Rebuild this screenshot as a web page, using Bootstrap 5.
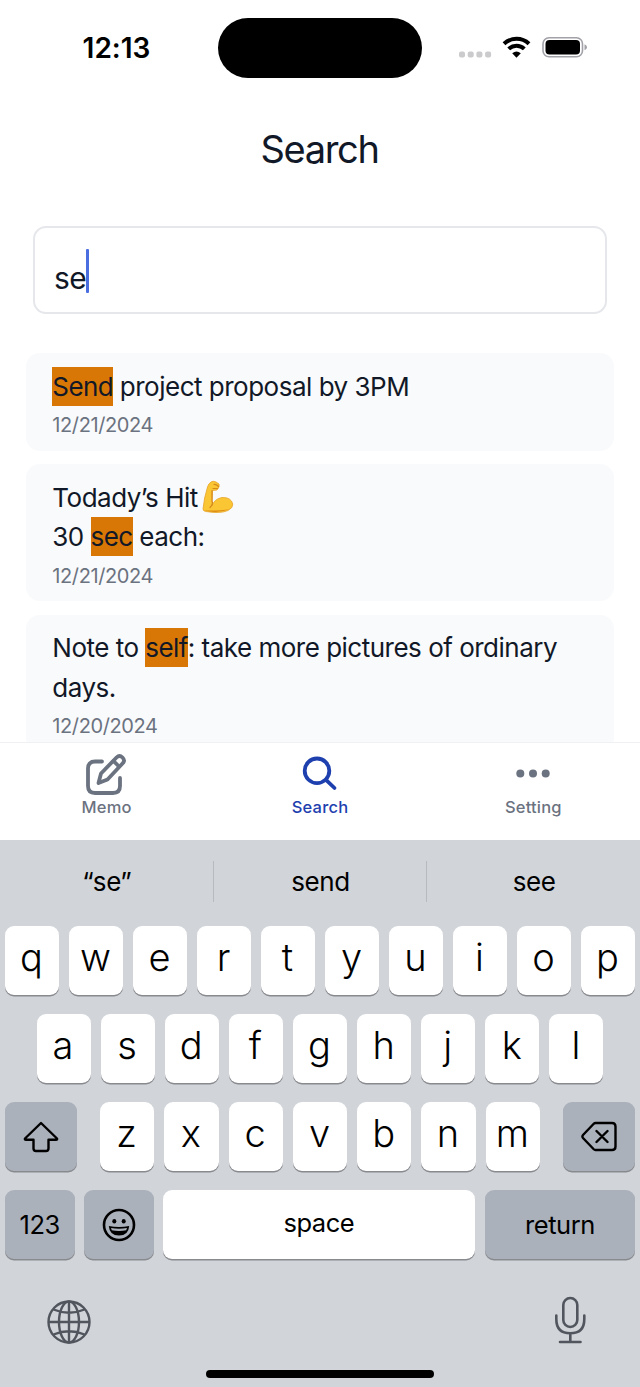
<!DOCTYPE html>
<html lang="en">
<head>
<meta charset="utf-8">
<meta name="viewport" content="width=device-width, initial-scale=1">
<title>Search</title>
<link rel="stylesheet" href="https://cdn.jsdelivr.net/npm/bootstrap@5.3.0/dist/css/bootstrap.min.css">
<style>
  body { font-family: Inter, "Liberation Sans", sans-serif; color: #111827; font-size: 26px; line-height: 39px; font-feature-settings: "calt" 0; }
  svg { display: block; flex: none; }
  .screen { width: 640px; height: 1387px; }
  .statusbar { height: 96px; padding-top: 18px; }
  .clock { width: 218px; padding-left: 15px; height: 60px; font-size: 28px; font-weight: 600; letter-spacing: 0; color: #000; }
  .island { width: 204px; height: 60px; border-radius: 30px; background: #000; }
  .indicators { width: 218px; height: 60px; padding-left: 37px; }
  .app-title { height: 130px; padding-top: 25px; font-size: 38px; line-height: 56px; letter-spacing: -1.35px; font-weight: 400; margin: 0; padding-right: 1px; }
  .search-field { height: 88px; margin: 0 33px; border: 2px solid #e5e7eb; border-radius: 13px; padding: 21px 0 0 19px; font-size: 30px; letter-spacing: -.5px; }
  .search-field .typed { line-height: 58px; }
  .caret { width: 3px; height: 44px; border-radius: 1px; background: #4a6ee0; margin-left: -.5px; }
  .results { height: 428px; padding: 39px 26px 0; gap: 13.5px; }
  .memo { flex: none; background: #f9fafb; border-radius: 14px; padding: 13.7px 27px 6.5px 26.3px; }
  .memo p { margin: 0; letter-spacing: -.5px; line-height: 39.4px; }
  .memo time { display: block; font-size: 20px; line-height: 38px; letter-spacing: -.4px; color: #6b7280; }
  .hit { display: inline-block; height: 39px; background: #d97706; letter-spacing: -.6px; }
  .arm { display: inline-block; vertical-align: -7px; margin-left: 4px; }
  .tabs { height: 98px; border-top: 1px solid #f0f1f4; }
  .tab { color: #6b7280; font-size: 16.5px; font-weight: 500; line-height: 20px; letter-spacing: .2px; padding-top: 10px; }
  .tab svg { height: 44px; }
  .tab.on { color: #1e40af; }
  .keyboard { height: 547px; background: #d1d4d9; color: #000; }
  .suggestions { height: 86px; letter-spacing: -.4px; }
  .suggestions > div { flex: 1 1 0; line-height: 42px; margin-top: 21px; height: 41px; padding-left: 1px; }
  .suggestions > div:not(:last-child) { border-right: 1px solid #b7bac0; }
  .keys { height: 88px; padding: 0 5px; gap: 10px; }
  .keys.home { padding: 0 36.5px; }
  .keys.bottom { gap: 9.66px; }
  .key { flex: 1 1 0; height: 69px; border-radius: 9px; background: #fff; box-shadow: 0 1.5px 0 #888a8e; font-size: 38px; font-weight: 300; padding-bottom: 7px; padding-right: 1px; }
  .key.fn { background: #abb1bb; font-size: 25.5px; font-weight: 400; padding-bottom: 0; padding-right: 0; letter-spacing: -.4px; }
  .key.space { flex: 0 0 312px; font-size: 25.5px; font-weight: 400; padding-bottom: 5px; letter-spacing: -.5px; }
  .key.w72 { flex: 0 0 72px; } .key.w70 { flex: 0 0 69.5px; } .key.w150 { flex: 0 0 150px; }
  .letters { gap: 10px; margin: 0 13px; }
  .dock { padding: 14px 51px 0 47px; color: #51555d; }
  .home-bar { width: 228px; height: 8px; border-radius: 4px; background: #000; margin: 26px auto 0; }
</style>
</head>
<body>
<main class="screen overflow-hidden bg-white">
  <header class="statusbar d-flex">
    <div class="clock d-flex align-items-center justify-content-center">12:13</div>
    <div class="island"></div>
    <div class="indicators d-flex align-items-center">
      <svg width="132" height="30" viewBox="0 0 132 30">
        <g fill="#cbcbce"><rect y="18.500" width="6" height="6" rx="2"/><rect x="8.700" y="18.500" width="6" height="6" rx="2"/><rect x="17.400" y="18.500" width="6" height="6" rx="2"/><rect x="26.100" y="18.500" width="6" height="6" rx="2"/></g>
        <g fill="none" stroke="#000" stroke-width="4"><path d="M45 10.800A18.200 18.200 0 0 1 70 10.800"/><path d="M49.700 15.900A11.200 11.200 0 0 1 65.300 15.900"/></g>
        <path d="M53.200 20.200Q57.500 16.600 61.800 20.200L57.500 24.700Z"/>
        <rect x="84" y="4.700" width="39.500" height="19" rx="6" fill="none" stroke="#a1a2a8" stroke-width="1.600"/>
        <rect x="86.500" y="7" width="34.500" height="14.500" rx="4"/>
        <path d="M125.500 11.200Q128 12 128 14.200T125.500 17.200Z" fill="#a1a2a8"/>
      </svg>
    </div>
  </header>

  <h1 class="app-title text-center">Search</h1>

  <div class="search-field d-flex"><span class="typed">se</span><span class="caret"></span></div>

  <section class="results d-flex flex-column overflow-hidden">
    <article class="memo"><p><span class="hit">Send</span> project proposal by 3PM</p><time>12/21/2024</time></article>
    <article class="memo"><p>Todady’s Hit<svg class="arm" width="32" height="34" viewBox="0 0 32 34" role="img" aria-label="flexed biceps">
      <path d="M9 2Q11 .6 14 2L17 4Q18 7 15 10L10.500 10.500L10 21Q11 24 10 26Q12 19 20 17.500Q29 17 30.800 24Q31 28 26 30.500Q18 34 4 31.500Q1 31 1 29Q2 18 5.500 7Q6.500 3.500 9 2Z" fill="#fbc634" stroke="#e6a32a" stroke-width=".8"/>
      <path d="M2 30.500Q16 34 28 29Q18 31 2 30.500Z" fill="#dc8b16"/><path d="M10 10.500V21Q11.500 24 8 27.500M11 8.500L15.500 8.500M12 4.500Q14 4 16.500 6.500" fill="none" stroke="#d4891c" stroke-width="1.200" stroke-linecap="round"/></svg><br>30 <span class="hit">sec</span> each:</p><time>12/21/2024</time></article>
    <article class="memo"><p>Note to <span class="hit">self</span>: take more pictures of ordinary<br>days.</p><time>12/20/2024</time></article>
  </section>

  <nav class="tabs row g-0 text-center">
    <div class="tab col d-flex flex-column align-items-center">
      <svg width="44" height="44" viewBox="0 0 44 44" fill="none" stroke="currentColor" stroke-width="3.800" stroke-linecap="round" stroke-linejoin="round"><path d="M17 8.500H10Q3 8.500 3 15.500V33Q3 40 10 40H28Q35 40 35 33V25"/><path d="M13.500 30L16 20.500L31.500 4.500Q34.500 1.500 37.500 4.500Q40.500 7.500 37.500 10.500L22.500 26.500Z"/><path d="M28.500 8L34 13.500"/></svg>
      <span>Memo</span>
    </div>
    <div class="tab on col d-flex flex-column align-items-center">
      <svg width="44" height="44" viewBox="0 0 44 44" fill="none" stroke="currentColor" stroke-width="3.800" stroke-linecap="round"><circle cx="19" cy="17.800" r="12.300"/><path d="M28 26.800L36.500 35"/></svg>
      <span>Search</span>
    </div>
    <div class="tab col d-flex flex-column align-items-center">
      <svg width="44" height="44" viewBox="0 0 44 44" fill="currentColor"><circle cx="9.300" cy="20.500" r="4"/><circle cx="22" cy="20.500" r="4"/><circle cx="34.700" cy="20.500" r="4"/></svg>
      <span>Setting</span>
    </div>
  </nav>

  <section class="keyboard">
    <div class="suggestions d-flex text-center"><div>“se”</div><div>send</div><div>see</div></div>
    <div class="keys d-flex">
      <div class="key d-flex align-items-center justify-content-center">q</div><div class="key d-flex align-items-center justify-content-center">w</div><div class="key d-flex align-items-center justify-content-center">e</div><div class="key d-flex align-items-center justify-content-center">r</div><div class="key d-flex align-items-center justify-content-center">t</div><div class="key d-flex align-items-center justify-content-center">y</div><div class="key d-flex align-items-center justify-content-center">u</div><div class="key d-flex align-items-center justify-content-center">i</div><div class="key d-flex align-items-center justify-content-center">o</div><div class="key d-flex align-items-center justify-content-center">p</div>
    </div>
    <div class="keys home d-flex">
      <div class="key d-flex align-items-center justify-content-center">a</div><div class="key d-flex align-items-center justify-content-center">s</div><div class="key d-flex align-items-center justify-content-center">d</div><div class="key d-flex align-items-center justify-content-center">f</div><div class="key d-flex align-items-center justify-content-center">g</div><div class="key d-flex align-items-center justify-content-center">h</div><div class="key d-flex align-items-center justify-content-center">j</div><div class="key d-flex align-items-center justify-content-center">k</div><div class="key d-flex align-items-center justify-content-center">l</div>
    </div>
    <div class="keys d-flex">
      <div class="key fn w72 d-flex align-items-center justify-content-center">
        <svg width="36" height="32" viewBox="0 0 36 32" fill="none" stroke="#000" stroke-width="2.400" stroke-linejoin="round"><path d="M18 2L34 17.500Q34.500 18.800 33 18.800H25.500V27.500Q25.500 30 23 30H13Q10.500 30 10.500 27.500V18.800H3Q1.500 18.800 2 17.500Z"/></svg>
      </div>
      <div class="letters d-flex flex-fill">
        <div class="key d-flex align-items-center justify-content-center">z</div><div class="key d-flex align-items-center justify-content-center">x</div><div class="key d-flex align-items-center justify-content-center">c</div><div class="key d-flex align-items-center justify-content-center">v</div><div class="key d-flex align-items-center justify-content-center">b</div><div class="key d-flex align-items-center justify-content-center">n</div><div class="key d-flex align-items-center justify-content-center">m</div>
      </div>
      <div class="key fn w72 d-flex align-items-center justify-content-center">
        <svg width="36" height="32" viewBox="0 0 36 32" fill="none" stroke="#000" stroke-width="2.400" stroke-linejoin="round" stroke-linecap="round"><path d="M14.500 2H31Q34.500 2 34.500 5.500V25.500Q34.500 29 31 29H14.500Q13.500 29 12.500 28L2 17Q.8 15.500 2 14L12.500 3Q13.500 2 14.500 2ZM15.500 10L26.500 21M26.500 10L15.500 21"/></svg>
      </div>
    </div>
    <div class="keys bottom d-flex">
      <div class="key fn w70 d-flex align-items-center justify-content-center">123</div>
      <div class="key fn w70 d-flex align-items-center justify-content-center">
        <svg width="34" height="34" viewBox="0 0 34 34"><circle cx="17" cy="17" r="15" fill="none" stroke="#000" stroke-width="2.600"/><ellipse cx="12.300" cy="13.300" rx="2" ry="2.300"/><ellipse cx="21.700" cy="13.300" rx="2" ry="2.300"/><path d="M6.800 18Q17 20 27.200 18Q26.500 27.500 17 27.500T6.800 18Z"/><path d="M9 20Q17 21.500 25 20L24.200 22.200Q17 23.800 9.800 22.200Z" fill="#abb1bb"/></svg>
      </div>
      <div class="key space d-flex align-items-center justify-content-center">space</div>
      <div class="key fn w150 d-flex align-items-center justify-content-center">return</div>
    </div>
    <div class="dock d-flex justify-content-between">
      <svg width="44" height="52" viewBox="0 0 44 52" fill="none" stroke="currentColor" stroke-width="2.400"><circle cx="22" cy="30" r="20.500"/><path d="M22 9.500V50.500M1.500 30H42.500M6.500 17.500Q22 24 37.500 17.500M6.500 42.500Q22 36 37.500 42.500"/><ellipse cx="22" cy="30" rx="10" ry="20.500"/></svg>
      <svg width="38" height="52" viewBox="0 0 38 52" fill="none" stroke="currentColor" stroke-width="2.600" stroke-linecap="round"><rect x="12.300" y="6" width="14" height="29" rx="7"/><path d="M5.300 23.500V27Q5.300 41.300 19.300 41.300T33.300 27V23.500M19.300 41.300V50M9 50H29.500"/></svg>
    </div>
    <div class="home-bar"></div>
  </section>
</main>
<script src="https://cdn.jsdelivr.net/npm/bootstrap@5.3.0/dist/js/bootstrap.bundle.min.js"></script>
</body>
</html>
